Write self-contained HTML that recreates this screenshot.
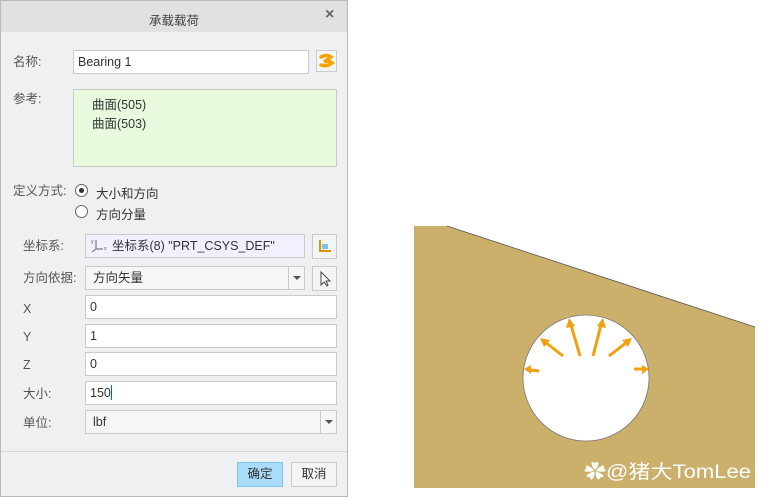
<!DOCTYPE html>
<html><head><meta charset="utf-8"><style>
*{margin:0;padding:0;box-sizing:border-box}
body{width:768px;height:500px;background:#fff;position:relative;overflow:hidden;font-family:"Liberation Sans","Noto Sans CJK SC",sans-serif;font-size:12.5px;color:#333}
.a{position:absolute}
.dlg{left:0;top:0;width:348px;height:497px;background:#eff0f2;border:1px solid #b8babd}
.tb{left:0;top:0;width:346px;height:31px;background:#dfe1e3}
.lbl{color:#555;line-height:16px}
.in{background:#fff;border:1px solid #c8cacd;height:24px;line-height:22px;padding-left:4px;color:#333}
.btn{background:#f3f4f5;border:1px solid #c8cacd}
.rad{width:13px;height:13px;border:1px solid #666;border-radius:50%;background:#fff}
</style></head><body>
<div class="a dlg">
<div class="a tb"></div>
<div class="a" style="left:0;width:346px;top:9px;text-align:center;color:#444">承载载荷</div>
<div class="a" style="left:324px;top:5px;font-size:16px;font-weight:bold;color:#666">×</div>

<div class="a lbl" style="left:12px;top:53px">名称:</div>
<div class="a in" style="left:72px;top:49px;width:236px">Bearing 1</div>
<div class="a btn" style="left:315px;top:49px;width:21px;height:22px"><svg width="19" height="20"><path d="M4 6 Q10 3 14 6 L7 11 Q11 9 15 12 Q10 16 4 14" stroke="#f5a300" stroke-width="3.5" fill="none" stroke-linecap="round"/></svg></div>

<div class="a lbl" style="left:12px;top:90px">参考:</div>
<div class="a" style="left:72px;top:88px;width:264px;height:78px;background:#e8f9dd;border:1px solid #c8cacd"></div>
<div class="a" style="left:91px;top:93px">曲面(505)</div>
<div class="a" style="left:91px;top:112px">曲面(503)</div>

<div class="a lbl" style="left:12px;top:182px">定义方式:</div>
<div class="a rad" style="left:74px;top:183px"><div class="a" style="left:3px;top:3px;width:5px;height:5px;border-radius:50%;background:#333"></div></div>
<div class="a" style="left:95px;top:182px">大小和方向</div>
<div class="a rad" style="left:74px;top:204px"></div>
<div class="a" style="left:95px;top:203px">方向分量</div>

<div class="a lbl" style="left:22px;top:237px">坐标系:</div>
<div class="a in" style="left:84px;top:233px;width:220px;background:#f3effc;padding-left:26px">坐标系(8) "PRT_CSYS_DEF"</div>
<svg class="a" style="left:88px;top:236px" width="22" height="18"><path d="M7 3 V12 H14 M7 12 L3 15" stroke="#666" fill="none"/><text x="2" y="6" font-size="5" fill="#555">y</text><text x="15" y="13" font-size="5" fill="#555">x</text></svg>
<div class="a btn" style="left:311px;top:233px;width:25px;height:25px"><svg width="23" height="23"><path d="M7 5 V16 H18" stroke="#d49a00" stroke-width="2" fill="none"/><rect x="9" y="9" width="6" height="5" fill="#7cc0f0"/></svg></div>

<div class="a lbl" style="left:22px;top:269px">方向依据:</div>
<div class="a in" style="left:84px;top:265px;width:220px;background:#f5f6f7;padding-left:7px">方向矢量</div>
<div class="a" style="left:287px;top:266px;width:1px;height:22px;background:#c8cacd"></div>
<div class="a" style="left:292px;top:275px;border-left:4px solid transparent;border-right:4px solid transparent;border-top:4px solid #555"></div>
<div class="a btn" style="left:311px;top:265px;width:25px;height:25px"><svg width="23" height="23"><path d="M8 5 L8 18 L11 15 L14 19 L15 18 L13 14 L17 14 Z" stroke="#444" fill="#fff"/></svg></div>

<div class="a lbl" style="left:22px;top:300px">X</div>
<div class="a in" style="left:84px;top:294px;width:252px">0</div>
<div class="a lbl" style="left:22px;top:328px">Y</div>
<div class="a in" style="left:84px;top:323px;width:252px">1</div>
<div class="a lbl" style="left:22px;top:356px">Z</div>
<div class="a in" style="left:84px;top:351px;width:252px">0</div>
<div class="a lbl" style="left:22px;top:385px">大小:</div>
<div class="a in" style="left:84px;top:380px;width:252px">150<span style="display:inline-block;width:1px;height:15px;background:#06c;vertical-align:-3px"></span></div>
<div class="a lbl" style="left:22px;top:414px">单位:</div>
<div class="a in" style="left:84px;top:409px;width:252px;background:#f5f6f7;padding-left:7px">lbf</div>
<div class="a" style="left:319px;top:410px;width:1px;height:22px;background:#c8cacd"></div>
<div class="a" style="left:324px;top:419px;border-left:4px solid transparent;border-right:4px solid transparent;border-top:4px solid #555"></div>

<div class="a" style="left:0;top:450px;width:346px;height:1px;background:#d4d6d8"></div>
<div class="a" style="left:236px;top:461px;width:46px;height:25px;background:#a9dcf8;border:1px solid #7cc4ee;text-align:center;line-height:23px;color:#333">确定</div>
<div class="a btn" style="left:290px;top:461px;width:46px;height:25px;text-align:center;line-height:23px;color:#333">取消</div>
</div>

<svg class="a" style="left:0;top:0" width="768" height="500">
<defs><mask id="m"><rect width="768" height="500" fill="#fff"/><circle cx="586" cy="378" r="63" fill="#000"/></mask></defs>
<polygon points="414,226 447,226 755,327 755,488 414,488" fill="#cbb06c" mask="url(#m)"/>
<line x1="447" y1="226" x2="755" y2="327" stroke="#555" stroke-width="0.8"/>
<circle cx="586" cy="378" r="63" fill="none" stroke="#777" stroke-width="0.8"/>
<g stroke="#f0a010" stroke-width="3" fill="#f0a010">
<line x1="539" y1="371" x2="530" y2="370"/><polygon points="524,369 531,365 531,374" stroke="none"/>
<line x1="563" y1="356" x2="545" y2="342"/><polygon points="540,338 550,340 544,347" stroke="none"/>
<line x1="580" y1="356" x2="571" y2="325"/><polygon points="569,318 575,326 566,328" stroke="none"/>
<line x1="593" y1="356" x2="601" y2="325"/><polygon points="603,318 606,328 597,326" stroke="none"/>
<line x1="609" y1="356" x2="627" y2="342"/><polygon points="632,338 628,347 622,340" stroke="none"/>
<line x1="634" y1="369" x2="643" y2="369"/><polygon points="649,369 642,365 642,374" stroke="none"/>
</g>
<text x="584" y="478" font-size="19" fill="#fff" textLength="167" lengthAdjust="spacingAndGlyphs" font-family="Liberation Sans,Noto Sans CJK SC,sans-serif">✿@猪大TomLee</text>
</svg>
</body></html>
